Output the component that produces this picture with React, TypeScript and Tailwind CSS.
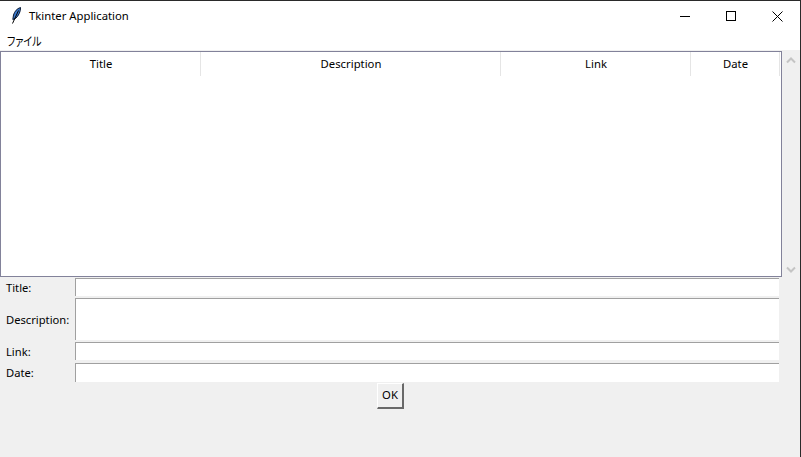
import React from 'react';

const font = "font-['Noto_Sans','Noto_Sans_CJK_JP',sans-serif]";

const FeatherIcon: React.FC = () => (
  <svg width="16" height="18" viewBox="0 0 16 18">
    <path d="M13.5 0.5 C10 1.5 7.5 4.5 6.5 8 L5.8 12.5 L8.5 11.5 C11.5 9 13.8 4.5 13.5 0.5 Z" fill="#3a78cc" stroke="#0b1a33" strokeWidth="1" />
    <path d="M11.5 3.5 L5.5 16.5" stroke="#000" strokeWidth="1" fill="none" />
  </svg>
);

const Field: React.FC<{ label: string; height: string; margin: string; labelPad?: string }> = ({ label, height, margin, labelPad = 'pt-[2px]' }) => (
  <div className={`flex items-center ${margin}`}>
    <label className={`w-[75px] pl-[6px] ${labelPad} leading-[14px] text-[11.2px] text-black shrink-0`}>{label}</label>
    <div className={`w-[704px] ${height} bg-white border-t border-l border-[#a0a0a0]`} />
  </div>
);

export default function App() {
  const columns = [
    { name: 'Title', w: 'w-[200px]' },
    { name: 'Description', w: 'w-[300px]' },
    { name: 'Link', w: 'w-[190px]' },
    { name: 'Date', w: 'w-[89px]' },
  ];

  return (
    <div className={`${font} w-[801px] h-[457px] bg-[#f0f0f0] overflow-hidden flex flex-col border-t border-r border-[#2a2a2a]`}>
      <div className="h-[30px] bg-white flex items-center shrink-0">
        <div className="ml-[7px] w-4 h-[18px]"><FeatherIcon /></div>
        <span className="ml-[6px] text-[11.3px] text-black">Tkinter Application</span>
        <div className="ml-auto flex items-center text-black">
          <div className="w-[46px] flex justify-center">
            <svg width="10" height="10" viewBox="0 0 10 10"><path d="M0 5.5 H10" stroke="#000" strokeWidth="1" /></svg>
          </div>
          <div className="w-[46px] flex justify-center"><div className="w-[10px] h-[10px] border border-black" /></div>
          <div className="w-[46px] flex justify-center">
            <svg width="11" height="11" viewBox="0 0 11 11"><path d="M0.5 0.5 L10.5 10.5 M10.5 0.5 L0.5 10.5" stroke="#000" strokeWidth="1" fill="none" /></svg>
          </div>
        </div>
      </div>
      <div className="h-[19px] bg-white flex items-center pt-[2px] pl-[7px] text-[12px] text-black shrink-0">
        <span className="inline-block origin-left scale-x-[0.83] [font-feature-settings:'palt']">ファイル</span>
      </div>

      <div className="flex h-[226px] mt-[1px] shrink-0">
        <div className="w-[782px] h-full bg-white border border-[#82829a]">
          <div className="flex h-[24px]">
            {columns.map((c) => (
              <div key={c.name} className={`${c.w} flex items-center justify-center pl-[1px] text-[11.3px] text-black border-r border-[#e5e5e5]`}>
                {c.name}
              </div>
            ))}
          </div>
        </div>
        <div className="flex-1 flex flex-col items-center justify-between pt-[6px] pb-[4px] text-[#c4c4c4]">
          <svg width="10" height="7" viewBox="0 0 10 7"><path d="M1 5.5 L5 1.5 L9 5.5" fill="none" stroke="currentColor" strokeWidth="2" /></svg>
          <svg width="10" height="7" viewBox="0 0 10 7"><path d="M1 1.5 L5 5.5 L9 1.5" fill="none" stroke="currentColor" strokeWidth="2" /></svg>
        </div>
      </div>

      <Field label="Title:" height="h-[18px]" margin="mt-[1px]" />
      <Field label="Description:" height="h-[42px]" margin="mt-[2px]" />
      <Field label="Link:" height="h-[18px]" margin="mt-[2px]" />
      <Field label="Date:" height="h-[19px]" margin="mt-[3px]" labelPad="pt-0" />

      <div className="flex justify-center mt-[1px] pr-[19px]">
        <button className="w-[27px] h-[26px] bg-[#f0f0f0] text-[11.3px] text-black border border-t-white border-l-white border-r-[#696969] border-b-[#696969] border-r-2 border-b-2 flex items-center justify-center">
          OK
        </button>
      </div>
    </div>
  );
}
